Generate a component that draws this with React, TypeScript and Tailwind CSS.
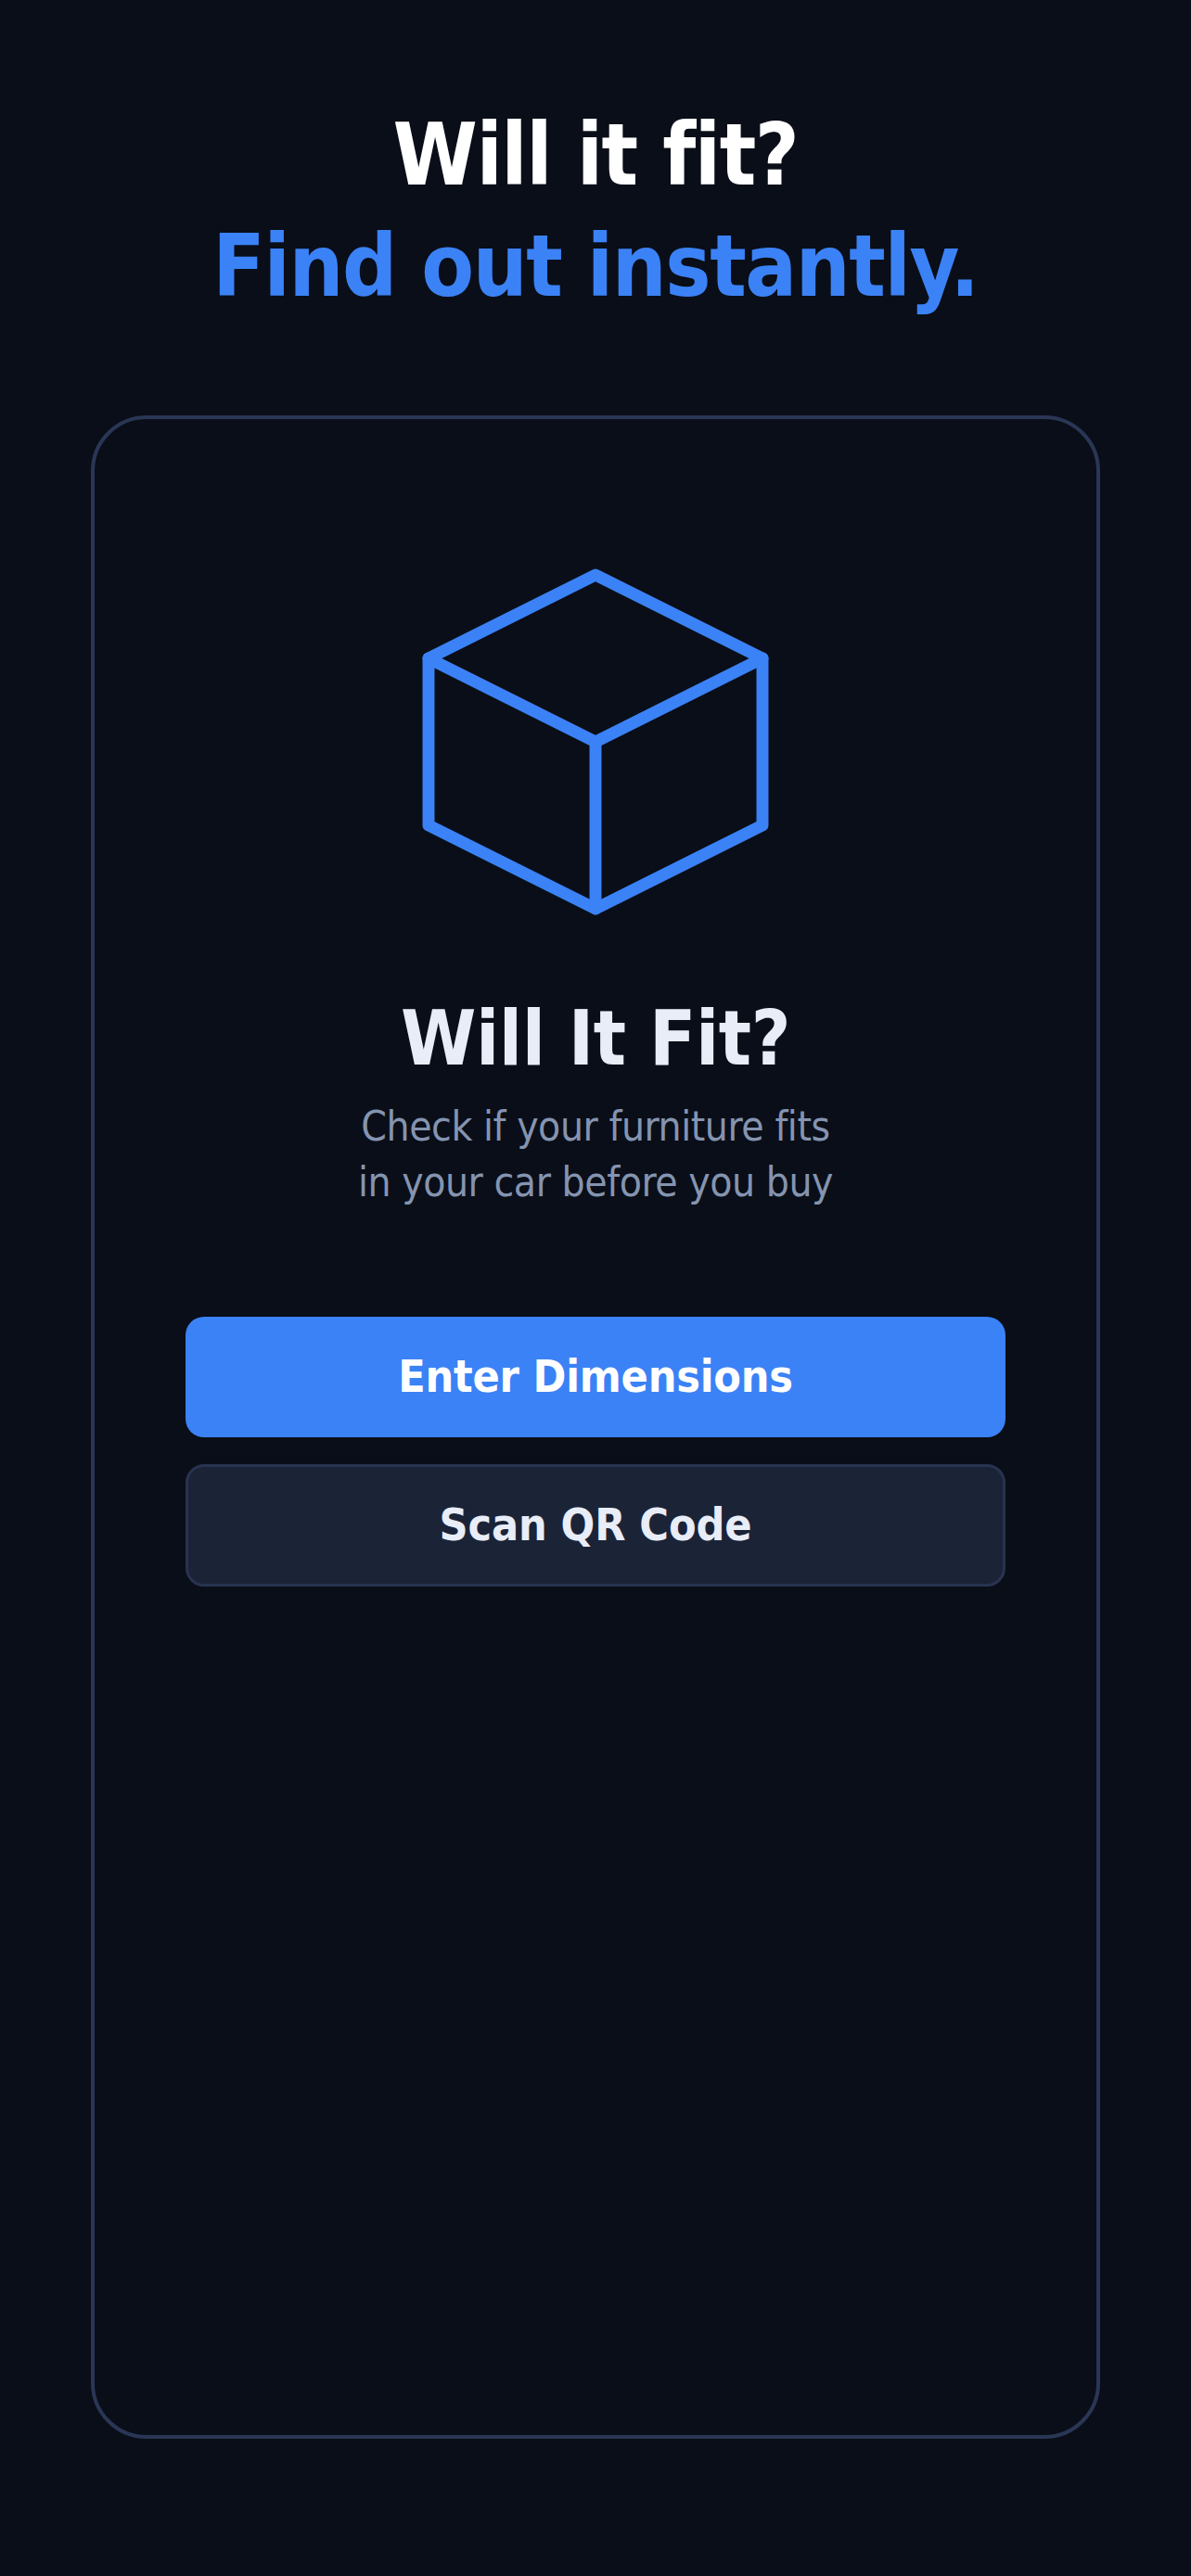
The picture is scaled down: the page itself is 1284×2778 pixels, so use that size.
const FONT = "font-['DejaVu_Sans_Condensed','DejaVu_Sans',sans-serif]";

function BoxIcon() {
  return (
    <svg
      className="w-[432px] h-[432px] text-[#3b82f6]"
      viewBox="0 0 24 24"
      fill="none"
      stroke="currentColor"
      strokeWidth={0.72}
      strokeLinecap="round"
      strokeLinejoin="round"
    >
      <path d="M12 2 2 7v10l10 5 10-5V7z" />
      <path d="M2 7l10 5 10-5" />
      <path d="M12 12v10" />
    </svg>
  );
}

export default function App() {
  return (
    <div className={`${FONT} min-h-[2778px] bg-[#0a0e18] flex flex-col items-center pt-[108px] px-[98px] pb-[148px]`}>
      {/* Headline */}
      <h1 className="text-center font-bold text-[92px] leading-[120px] tracking-[-1.4px] text-white mb-[100px]">
        Will it fit?
        <br />
        <span className="text-[#3b82f6]">Find out instantly.</span>
      </h1>

      {/* Card */}
      <div className="w-full flex-1 border-[4px] border-[#2a3655] rounded-[60px] flex flex-col items-center pt-[132px] px-[98px]">
        <BoxIcon />
        <h2 className="mt-[49px] font-bold text-[82px] leading-[110px] tracking-[-0.4px] text-[#e8edf7]">Will It Fit?</h2>
        <p className="mt-[10px] text-center text-[44px] leading-[60px] tracking-[-0.45px] text-[#8494b0]">
          Check if your furniture fits
          <br />
          in your car before you buy
        </p>
        <div className="w-full mt-[115px] flex flex-col gap-[29px]">
          <button className="h-[130px] pb-[3px] rounded-[20px] bg-[#3b82f6] text-white font-bold text-[48px] tracking-[-0.2px]">Enter Dimensions</button>
          <button className="h-[132px] pb-[3px] rounded-[20px] bg-[#1b2337] border-[3px] border-[#283350] text-[#e8edf7] font-bold text-[48px] tracking-[-0.1px]">Scan QR Code</button>
        </div>
      </div>
    </div>
  );
}
